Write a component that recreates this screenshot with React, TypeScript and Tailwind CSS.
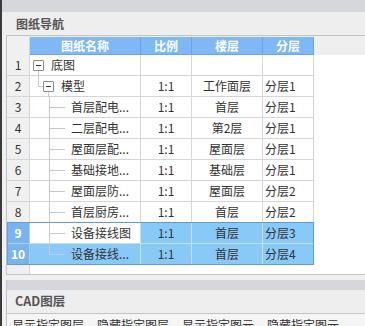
import React from "react";

type Row = {
  n: number;
  name: string;
  ratio: string;
  floor: string;
  layer: string;
  kind: "root" | "model" | "leaf" | "last";
};

const rows: Row[] = [
  { n: 1, name: "底图", ratio: "", floor: "", layer: "", kind: "root" },
  { n: 2, name: "模型", ratio: "1:1", floor: "工作面层", layer: "分层1", kind: "model" },
  { n: 3, name: "首层配电...", ratio: "1:1", floor: "首层", layer: "分层1", kind: "leaf" },
  { n: 4, name: "二层配电...", ratio: "1:1", floor: "第2层", layer: "分层1", kind: "leaf" },
  { n: 5, name: "屋面层配...", ratio: "1:1", floor: "屋面层", layer: "分层1", kind: "leaf" },
  { n: 6, name: "基础接地...", ratio: "1:1", floor: "基础层", layer: "分层1", kind: "leaf" },
  { n: 7, name: "屋面层防...", ratio: "1:1", floor: "屋面层", layer: "分层2", kind: "leaf" },
  { n: 8, name: "首层厨房...", ratio: "1:1", floor: "首层", layer: "分层2", kind: "leaf" },
  { n: 9, name: "设备接线图", ratio: "1:1", floor: "首层", layer: "分层3", kind: "leaf" },
  { n: 10, name: "设备接线...", ratio: "1:1", floor: "首层", layer: "分层4", kind: "last" },
];

function MinusBox() {
  return (
    <span className="absolute top-[5px] w-[11px] h-[11px] border border-[#8c8c8c] bg-white rounded-[1px] flex items-center justify-center">
      <span className="block w-[5px] h-[1px] bg-[#333]" />
    </span>
  );
}

function NameCell({ row, selected }: { row: Row; selected: "none" | "focus" | "sel" }) {
  const bg = selected === "sel" ? "bg-[#88c9f8]" : "bg-white";
  const border = selected === "none" ? "border-[#d6d6d6]" : "border-[#c4e2fa]";
  return (
    <div className={`relative w-[111px] h-full border-r border-b ${border} ${bg} shrink-0`}>
      {row.kind === "root" && (
        <>
          <span className="absolute left-[3px]">
            <MinusBox />
          </span>
          <span className="absolute left-[8px] top-[16px] bottom-[-1px] w-[1px] bg-[#c8c8c8]" />
          <span className="absolute left-[21px] top-0 h-[20px] flex items-center leading-none">{row.name}</span>
        </>
      )}
      {row.kind === "model" && (
        <>
          <span className="absolute left-[8px] top-0 h-[10px] w-[1px] bg-[#c8c8c8]" />
          <span className="absolute left-[8px] top-[10px] w-[5px] h-[1px] bg-[#c8c8c8]" />
          <span className="absolute left-[13px]">
            <MinusBox />
          </span>
          <span className="absolute left-[18px] top-[16px] bottom-[-1px] w-[1px] bg-[#c8c8c8]" />
          <span className="absolute left-[31px] top-0 h-[20px] flex items-center leading-none">{row.name}</span>
        </>
      )}
      {(row.kind === "leaf" || row.kind === "last") && (
        <>
          <span
            className={`absolute left-[19px] top-0 w-[1px] bg-[#c8c8c8] ${
              row.kind === "last" ? "h-[11px]" : "bottom-[-1px]"
            }`}
          />
          <span className="absolute left-[19px] top-[10px] w-[16px] h-[1px] bg-[#c8c8c8]" />
          <span className="absolute left-[41px] top-0 h-[20px] flex items-center leading-none">{row.name}</span>
        </>
      )}
    </div>
  );
}

function DataRow({ row }: { row: Row }) {
  const isSel = row.n >= 9;
  const nameSel: "none" | "focus" | "sel" = row.n === 9 ? "focus" : row.n === 10 ? "sel" : "none";
  const cellBg = isSel ? "bg-[#88c9f8]" : "bg-white";
  const cellBorder = isSel ? "border-[#c4e2fa]" : "border-[#d6d6d6]";
  return (
    <div className="flex h-[21px] shrink-0">
      <div
        className={`w-[23px] shrink-0 h-full border-r border-b flex items-center justify-center leading-none ${
          isSel
            ? "bg-[#7ab4f0] text-white font-bold border-[#a9cff5]"
            : "bg-[#f0f0f0] text-[#333] border-[#d6d6d6]"
        }`}
      >
        {row.n}
      </div>
      <NameCell row={row} selected={nameSel} />
      <div className={`w-[51px] shrink-0 h-full border-r border-b ${cellBorder} ${cellBg} flex items-center justify-center leading-none`}>
        {row.ratio}
      </div>
      <div className={`w-[71px] shrink-0 h-full border-r border-b ${cellBorder} ${cellBg} flex items-center justify-center leading-none`}>
        {row.floor}
      </div>
      <div className={`w-[51px] shrink-0 h-full border-r border-b ${cellBorder} ${cellBg} flex items-center pl-[2px] leading-none`}>
        {row.layer}
      </div>
      <div className="flex-1 bg-white" />
    </div>
  );
}

export default function App() {
  return (
    <div className="w-[365px] h-[326px] overflow-hidden flex bg-[#f0f0f0] font-['Noto_Sans_CJK_SC',sans-serif] text-[12px] text-[#333]">
      <div className="w-[2px] shrink-0 bg-[#3a3a3a]" />
      <div className="flex-1 flex flex-col min-w-0">
        <div className="h-[12px] shrink-0 bg-[#d5d7dc]" />
        <div className="h-[23px] shrink-0 bg-[#eeeeee] flex items-center pl-[14px] text-[12px] font-bold text-[#555] leading-none">
          图纸导航
        </div>
        <div className="ml-[4px] h-[240px] shrink-0 border-t border-l border-b border-[#c3c3c3] bg-white flex flex-col">
          <div className="h-[19px] shrink-0 pt-[1px] bg-[#efefef] flex">
            <div className="w-[23px] shrink-0 h-full border-r border-[#d6d6d6] bg-[#f0f0f0]" />
            <div className="w-[111px] shrink-0 h-full bg-[#7eb8f5] border-r border-b border-[#6aa6e6] text-white font-bold flex items-center justify-center leading-none">
              图纸名称
            </div>
            <div className="w-[51px] shrink-0 h-full bg-[#7eb8f5] border-r border-b border-[#6aa6e6] text-white font-bold flex items-center justify-center leading-none">
              比例
            </div>
            <div className="w-[71px] shrink-0 h-full bg-[#7eb8f5] border-r border-b border-[#6aa6e6] text-white font-bold flex items-center justify-center leading-none">
              楼层
            </div>
            <div className="w-[51px] shrink-0 h-full bg-[#7eb8f5] border-r border-b border-[#6aa6e6] text-white font-bold flex items-center justify-center leading-none">
              分层
            </div>
            <div className="flex-1" />
          </div>
          {rows.slice(0, 8).map((r) => (
            <DataRow key={r.n} row={r} />
          ))}
          <div className="relative flex flex-col">
            {rows.slice(8).map((r) => (
              <DataRow key={r.n} row={r} />
            ))}
            <div className="absolute left-0 top-[-1px] w-[307px] h-[43px] border border-[#5a9de2] pointer-events-none" />
          </div>
          <div className="flex-1 flex">
            <div className="w-[23px] shrink-0 h-full border-r border-[#d6d6d6] bg-[#f0f0f0]" />
            <div className="flex-1 bg-white" />
          </div>
        </div>
        <div className="mt-[5px] ml-[4px] flex-1 border-l border-[#c3c3c3] flex flex-col">
          <div className="h-[10px] shrink-0 bg-[#d5d7dc]" />
          <div className="h-[24px] shrink-0 bg-[#eeeeee] border-b border-[#c3c3c3] flex items-center pl-[8px] text-[12.5px] font-bold text-[#555] leading-none">
            CAD图层
          </div>
          <div className="flex-1 bg-[#f5f5f5] flex items-start pt-[5px] pl-[5px] gap-[13px] whitespace-nowrap leading-none">
            <span>显示指定图层</span>
            <span>隐藏指定图层</span>
            <span>显示指定图元</span>
            <span>隐藏指定图元</span>
          </div>
        </div>
      </div>
    </div>
  );
}
